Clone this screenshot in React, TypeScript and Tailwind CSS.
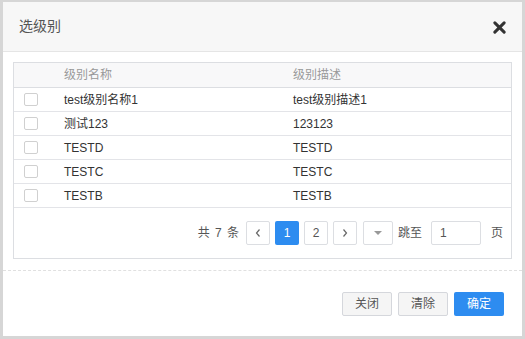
import React from 'react';

const rows = [
    { name: 'test级别名称1', desc: 'test级别描述1' },
    { name: '测试123', desc: '123123' },
    { name: 'TESTD', desc: 'TESTD' },
    { name: 'TESTC', desc: 'TESTC' },
    { name: 'TESTB', desc: 'TESTB' },
];

const font = { fontFamily: '"Liberation Sans", "Noto Sans CJK SC", sans-serif' };

const App: React.FC = () => {
    return (
        <div className="w-[525px] h-[339px] bg-[#d6d6d6] pt-[2px] pl-[3px] overflow-hidden" style={font}>
            <div className="w-[519px] h-[334px] bg-white flex flex-col">
                {/* Header */}
                <div className="h-[50px] bg-[#f7f7f7] border-b border-[#e5e5e5] flex items-center justify-between pl-[16px] pr-[16px]">
                    <span className="text-[14px] text-[#555]">选级别</span>
                    <svg width="13" height="13" viewBox="0 0 14 14" className="mt-[1px]">
                        <path d="M2 2 L12 12 M12 2 L2 12" stroke="#333" strokeWidth="3.2" strokeLinecap="round" />
                    </svg>
                </div>

                {/* Table */}
                <div className="mx-[10px] mt-[10px] border border-[#dcdee2] text-[12px]">
                    <div className="flex h-[25px] items-center border-b border-[#dcdee2] bg-[#f8f8f9] text-[#999]">
                        <div className="w-[50px]" />
                        <div className="w-[229px]">级别名称</div>
                        <div className="flex-1">级别描述</div>
                    </div>
                    {rows.map((r, i) => (
                        <div key={i} className="flex h-[24px] items-center border-b border-[#e3e4e8] text-[#333]">
                            <div className="w-[50px] pl-[10px]">
                                <div className="w-[14px] h-[13px] border border-[#d0d0d0] rounded-[2px] bg-white" />
                            </div>
                            <div className="w-[229px]">{r.name}</div>
                            <div className="flex-1">{r.desc}</div>
                        </div>
                    ))}
                    {/* Pagination */}
                    <div className="flex items-center justify-end h-[50px] pr-[8px] text-[#555]">
                        <span className="mr-[6px] tracking-[1px]">共 7 条</span>
                        <div className="w-[24px] h-[24px] border border-[#dcdee2] rounded-[2px] flex items-center justify-center mr-[5px]">
                            <svg width="8" height="10" viewBox="0 0 8 10"><path d="M5.5 1.5 L2.5 5 L5.5 8.5" stroke="#666" strokeWidth="1.2" fill="none" /></svg>
                        </div>
                        <div className="w-[24px] h-[24px] bg-[#2d8cf0] rounded-[2px] flex items-center justify-center text-white mr-[5px]">1</div>
                        <div className="w-[24px] h-[24px] border border-[#dcdee2] rounded-[2px] flex items-center justify-center mr-[5px]">2</div>
                        <div className="w-[24px] h-[24px] border border-[#dcdee2] rounded-[2px] flex items-center justify-center mr-[6px]">
                            <svg width="8" height="10" viewBox="0 0 8 10"><path d="M2.5 1.5 L5.5 5 L2.5 8.5" stroke="#666" strokeWidth="1.2" fill="none" /></svg>
                        </div>
                        <div className="w-[30px] h-[24px] border border-[#dcdee2] rounded-[2px] flex items-center justify-center mr-[5px]">
                            <svg width="10" height="6" viewBox="0 0 10 6"><path d="M1 1 L9 1 L5 5 Z" fill="#999" /></svg>
                        </div>
                        <span className="mr-[9px]">跳至</span>
                        <div className="w-[50px] h-[24px] border border-[#dcdee2] rounded-[2px] flex items-center pl-[8px] mr-[10px] text-[#555]">1</div>
                        <span>页</span>
                    </div>
                </div>

                {/* Footer */}
                <div className="mt-[11px] border-t border-dashed border-[#e0e0e0] flex justify-end gap-[6px] pr-[18px] pt-[21px] text-[12px]">
                    <button className="w-[50px] h-[24px] bg-[#f5f5f5] border border-[#d5d7dc] rounded-[2px] text-[#555]">关闭</button>
                    <button className="w-[50px] h-[24px] bg-[#f5f5f5] border border-[#d5d7dc] rounded-[2px] text-[#555]">清除</button>
                    <button className="w-[50px] h-[24px] bg-[#2d8cf0] rounded-[2px] text-white">确定</button>
                </div>
            </div>
        </div>
    );
};

export default App;
